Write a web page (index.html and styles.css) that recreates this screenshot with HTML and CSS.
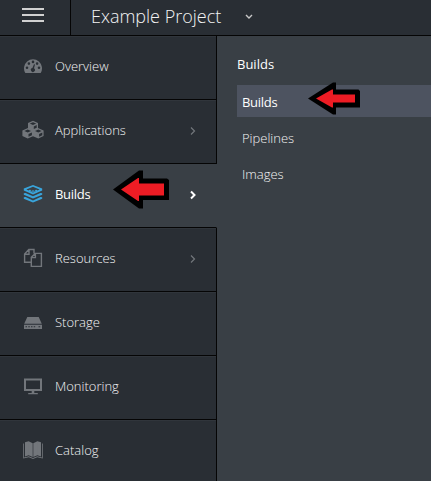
FILE: index.html
```html
<!DOCTYPE html>
<html lang="en">
<head>
<meta charset="utf-8">
<title>Example Project</title>
<link rel="stylesheet" href="styles.css">
</head>
<body>
<header class="topbar">
  <button class="menu-toggle" aria-label="Menu"><span></span><span></span><span></span></button>
  <div class="project">
    <span class="project-name">Example Project</span>
    <svg class="caret" width="8" height="6" viewBox="0 0 8 6"><path d="M1 1l3 3 3-3"/></svg>
  </div>
</header>
<div class="layout">
  <nav class="sidebar">
    <a class="item">
      <svg class="icon" viewBox="0 0 22 20"><path fill-rule="evenodd" d="M3.3 17A9 9 0 1 1 18.7 17ZM5 10.5a1.3 1.3 0 1 0 0 2.6a1.3 1.3 0 1 0 0-2.6M6.9 6.3a1.3 1.3 0 1 0 0 2.6a1.3 1.3 0 1 0 0-2.6M11 4.6a1.3 1.3 0 1 0 0 2.6a1.3 1.3 0 1 0 0-2.6M15.1 6.3a1.3 1.3 0 1 0 0 2.6a1.3 1.3 0 1 0 0-2.6M17 10.5a1.3 1.3 0 1 0 0 2.6a1.3 1.3 0 1 0 0-2.6M12 8.2L10.4 12a2 2 0 1 0 1.6.3L13 8.4Z"/></svg>
      <span class="label">Overview</span>
    </a>
    <a class="item">
      <svg class="icon" viewBox="0 0 22 20"><path fill-rule="evenodd" d="M11 .8L16 3V8L21.6 10.5V16L16.3 18.6L11 16.2L5.7 18.6L.4 16V10.5L6 8V3ZM11 2.2L7.8 3.6L11 5L14.2 3.6ZM11.8 6.4V9L14.7 7.7V5ZM5.7 9.5L2.4 11L5.7 12.5L9 11ZM16.3 9.5L13 11L16.3 12.5L19.6 11ZM6.5 13.9V16.8L9.9 15.2V12.4ZM17.1 13.9V16.8L20.3 15.2V12.4Z"/></svg>
      <span class="label">Applications</span>
      <svg class="chevron" viewBox="0 0 6 10"><path d="M1 1.5l3.5 3.5L1 8.5"/></svg>
    </a>
    <a class="item active">
      <svg class="icon" viewBox="0 0 22 20"><path fill-rule="evenodd" d="M11 1L20.2 4.6V6.6L11 10.4L1.8 6.6V4.6ZM11 2.8L4.4 5.5L6.5 6.4L8 5.6L9.3 6.9L11 6.2L12.7 6.9L14 5.6L15.5 6.4L17.6 5.5ZM7.6 7L11 8.5L14.4 7L11 7.8Z"/><path d="M1.8 9.2L3.6 9L11 12.3L18.4 9L20.2 9.2V10.7L11 14.4L1.8 10.7ZM1.8 13.3L3.6 13.1L11 16.4L18.4 13.1L20.2 13.3V14.8L11 18.5L1.8 14.8Z"/></svg>
      <span class="label">Builds</span>
      <svg class="chevron" viewBox="0 0 6 10"><path d="M1 1.5l3.5 3.5L1 8.5"/></svg>
      <svg class="pointer pointer-main" width="56" height="39" viewBox="0 0 56 39"><path d="M0 19.5L26 .5H30V8.5H54L56 10V30H30V38.5H26Z"/><path class="fill" d="M8 19.5L25 8H26V13.5H51V25.5H26V31H25Z"/></svg>
    </a>
    <a class="item">
      <svg class="icon outline" viewBox="0 0 22 20"><path d="M9.3 14.3H2.6V6L6.8 1.5H12V5.6M7 1.5V6.2H2.6M9.3 18.4V9.4L13.2 5.4H19.4V18.4ZM13.4 5.4V9.6H9.3"/></svg>
      <span class="label">Resources</span>
      <svg class="chevron" viewBox="0 0 6 10"><path d="M1 1.5l3.5 3.5L1 8.5"/></svg>
    </a>
    <a class="item">
      <svg class="icon" viewBox="0 0 22 20"><path fill-rule="evenodd" d="M5.3 5H16.7L19.8 11.7H2.2ZM2 12.7H20V17H2ZM3.5 14.2V15.3H5V14.2ZM6.3 14.2V15.3H7.8V14.2ZM9 14.2V15.3H10.5V14.2ZM11.7 14.2V15.3H13.2V14.2ZM16.5 14.2V15.3H18.2V14.2Z"/></svg>
      <span class="label">Storage</span>
    </a>
    <a class="item">
      <svg class="icon" viewBox="0 0 22 20"><path fill-rule="evenodd" d="M2 2.5H20V15H12.3V17H15.8V18.3H6.2V17H9.7V15H2ZM4 4.5V13H18V4.5Z"/></svg>
      <span class="label">Monitoring</span>
    </a>
    <a class="item">
      <svg class="icon" viewBox="0 0 22 20"><path d="M3 2.2L6.6 1.2V15.2L3 16.5ZM6.6 1.2L10.7 3.2V17L6.6 15.2ZM15.4 1.2L11.3 3.2V17L15.4 15.2ZM15.4 1.2L19 2.2V16.5L15.4 15.2Z"/><path d="M1.2 3.5H2V17.4L6.8 16.2L11 18L15.2 16.2L20 17.4V3.5H20.8V18.6L15.2 17.2L11 18.9L6.8 17.2L1.2 18.6Z"/></svg>
      <span class="label">Catalog</span>
    </a>
  </nav>
  <section class="submenu">
    <h2>Builds</h2>
    <a class="sub selected">Builds
      <svg class="pointer pointer-sub" width="52" height="33" viewBox="0 0 52 33"><path d="M0 16.5L25 .5H28V7.5H50.5L52 9V25.5H28V32.5H25Z"/><path class="fill" d="M8 16.5L24 7.5H25V12.5H47V20.5H25V25.5H24Z"/></svg>
    </a>
    <a class="sub">Pipelines</a>
    <a class="sub">Images</a>
  </section>
</div>
</body>
</html>
```
FILE: styles.css
```css
* { box-sizing: border-box; }
body {
  margin: 0;
  height: 481px;
  overflow: hidden;
  background: #393f45;
  color: #f4f4f4;
  font: 13px/20px "Open Sans", sans-serif;
}
.topbar {
  display: flex;
  height: 36px;
  background: #292e34;
  border-bottom: 1px solid #050505;
}
.menu-toggle {
  display: flex;
  flex-direction: column;
  gap: 4px;
  width: 71px;
  padding: 8px 0 0 22px;
  border: 0;
  border-right: 1px solid #050505;
  background: none;
}
.menu-toggle span { width: 22px; height: 2px; background: #d1d1d1; }
.project {
  display: flex;
  align-items: center;
  gap: 24px;
  padding: 0 0 4px 20px;
  font-size: 18px;
  font-weight: 300;
}
.caret { margin-top: 2px; fill: none; stroke: #c8c8c8; stroke-width: 1.4; }
.layout { display: flex; height: 445px; }
.sidebar { width: 217px; flex: none; }
.item {
  position: relative;
  display: flex;
  align-items: center;
  height: 64px;
  padding: 0 20px 4px 22px;
  background: #292e34;
  border-right: 1px solid #050505;
  border-bottom: 1px solid #050505;
  box-shadow: inset 0 1px #30353b;
  font-weight: 300;
}
.item.active {
  background: #393f45;
  border-right-color: #393f45;
  box-shadow: none;
  color: #fff;
  font-weight: 400;
  letter-spacing: -0.3px;
}
.icon { width: 22px; height: 20px; margin-right: 11px; fill: #72767b; }
.icon.outline { fill: none; stroke: #72767b; stroke-width: 1.4; }
.active .icon { fill: #39a5dc; }
.label { flex: 1; }
.chevron { width: 6px; height: 10px; margin-top: 2px; fill: none; stroke: #72767b; stroke-width: 1.2; }
.active .chevron { stroke: #fff; stroke-width: 2; }
.submenu { flex: 1; padding: 18px 0 0 20px; }
h2 { margin: 0 0 11px; font-size: 13px; line-height: 20px; font-weight: 400; color: #fff; }
.sub {
  position: relative;
  display: block;
  height: 32px;
  margin-bottom: 4px;
  padding: 7px 5px;
  font-weight: 300;
}
.selected { background: #4d5360; color: #fff; font-weight: 400; letter-spacing: -0.3px; }
.pointer { position: absolute; }
.pointer .fill { fill: #ed1c24; }
.pointer-main { left: 113px; top: 6px; }
.pointer-sub { left: 71px; top: -3px; }
```
